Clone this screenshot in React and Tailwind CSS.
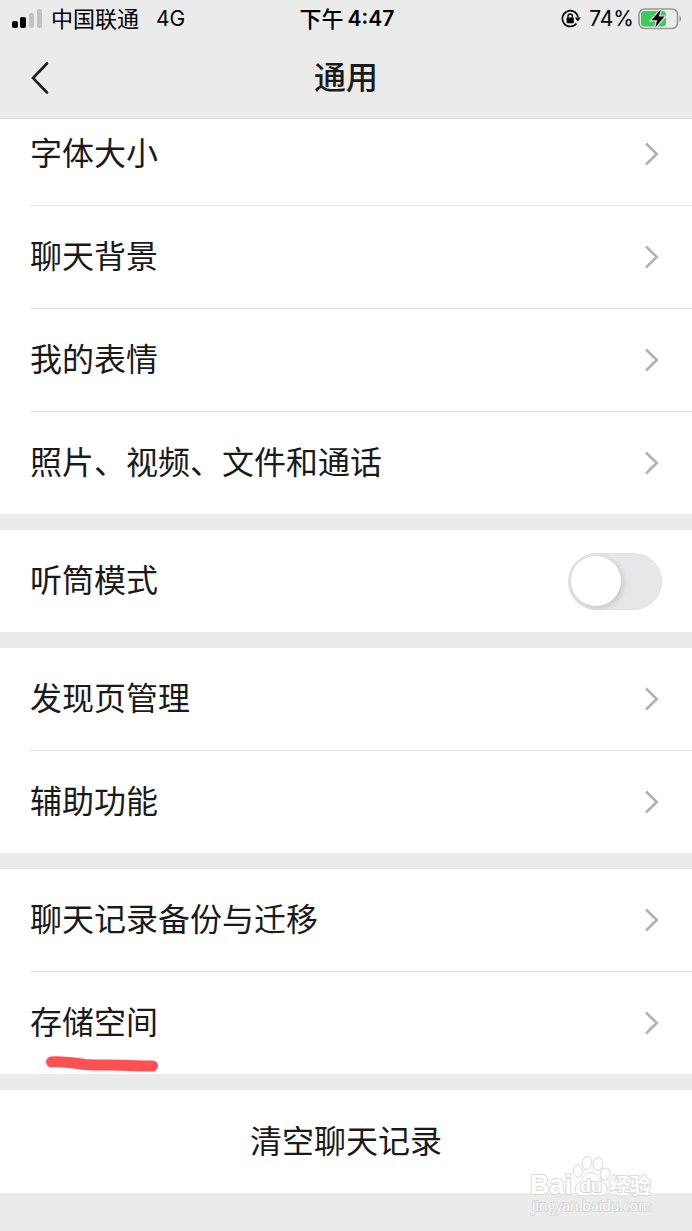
import React, { useState } from 'react';

const groups = [
  ['字体大小', '聊天背景', '我的表情', '照片、视频、文件和通话'],
  ['发现页管理', '辅助功能'],
  ['聊天记录备份与迁移', '存储空间'],
];

const SignalIcon = () => (
  <svg width="32" height="20" viewBox="0 0 32 20" aria-hidden="true">
    <rect x="0" y="12" width="6" height="7" rx="2" fill="#000" />
    <rect x="8" y="8" width="6" height="11" rx="2" fill="#000" />
    <rect x="17" y="4" width="5" height="15" rx="2" fill="#c2c2c2" />
    <rect x="25" y="0" width="5" height="19" rx="2" fill="#c2c2c2" />
  </svg>
);

const RotationLockIcon = () => (
  <svg width="20" height="20" viewBox="0 0 20 20" fill="none" aria-hidden="true">
    <path d="M15.4 14.6A7.9 7.9 0 1 1 17 8" stroke="#000" strokeWidth="1.6" />
    <path d="M13.8 8.4h6l-3 4z" fill="#000" />
    <rect x="5.6" y="8.6" width="7.2" height="5.6" rx="1" fill="#000" />
    <path d="M7 9V7.2a2.2 2.2 0 0 1 4.4 0V9" stroke="#000" strokeWidth="1.3" />
  </svg>
);

const BatteryIcon = () => (
  <svg width="44" height="24" viewBox="0 0 44 24" aria-hidden="true">
    <rect x="1" y="2" width="38.5" height="19.5" rx="5.5" fill="none" stroke="#98989a" strokeWidth="1.6" />
    <path d="M41.5 8.5c2 .8 2 5.6 0 6.4z" fill="#98989a" />
    <rect x="3" y="4" width="25" height="15.5" rx="3.5" fill="#3fc95c" />
    <path
      d="M22.8 2.5 13.5 13.2h5.6L17.3 20.5l9.2-10.9h-5.7z"
      fill="#000"
      stroke="#ebebeb"
      strokeWidth="2.4"
      paintOrder="stroke"
    />
  </svg>
);

const Chevron = () => (
  <svg width="16" height="26" viewBox="0 0 16 26" fill="none" aria-hidden="true">
    <path d="M2 2.5 12.8 13 2 23.5" stroke="#b2b2b2" strokeWidth="2.6" />
  </svg>
);

const Marker = () => (
  <svg className="absolute left-[15px] top-14" width="114" height="18" viewBox="0 0 114 18" fill="none" aria-hidden="true">
    <path
      d="M6.5 7c12-.8 20 .8 33 2.4 12 1 26 .4 38 .8 10 .8 20 .8 30 .8"
      stroke="#fb5153"
      strokeWidth="11"
      strokeLinecap="round"
    />
  </svg>
);

const Row = ({ label, last, marked }) => (
  <button type="button" className="block w-full pl-[30px] text-left">
    <span className={`box-content flex h-[102px] items-center justify-between ${last ? '' : 'border-b border-[#e3e3e3]'}`}>
      <span className="relative">
        {label}
        {marked && <Marker />}
      </span>
      <span className="pr-8">
        <Chevron />
      </span>
    </span>
  </button>
);

const Group = ({ items }) => (
  <section className="bg-white">
    {items.map((label, i) => (
      <Row key={label} label={label} last={i === items.length - 1} marked={label === '存储空间'} />
    ))}
  </section>
);

const Watermark = () => (
  <svg
    className="pointer-events-none absolute bottom-3 right-8 overflow-visible"
    width="130"
    height="64"
    viewBox="0 0 130 64"
    fill="#fff"
    stroke="#dadada"
    strokeWidth="1"
  >
    <g strokeWidth="2" paintOrder="stroke" strokeLinejoin="round">
      <text x="0" y="39" fontFamily="Liberation Sans, sans-serif" fontWeight="700" fontSize="27">Bai</text>
      <text x="79" y="38" fontFamily="Noto Sans CJK SC, sans-serif" fontWeight="700" fontSize="21">经验</text>
      <text x="2" y="56" fontFamily="Open Sans, sans-serif" fontSize="14" stroke="#d8d8d8" fill="#f8f8f8">
        jingyan.baidu.com
      </text>
    </g>
    <path d="M61 17.5c-6 0-7.5 6-11 9-4 3.5-6 7-4 11 3 4.5 8 2.5 15.500 2.500s12 2 15-2.500c2-4 0-7.500-4-11-4-3-5.500-9-11.500-9z" />
    <ellipse cx="48" cy="16" rx="4.6" ry="6.3" transform="rotate(-6 48 16)" />
    <ellipse cx="57" cy="8" rx="4.8" ry="6.6" />
    <ellipse cx="68" cy="9" rx="4.8" ry="6.4" transform="rotate(8 68 9)" />
    <ellipse cx="75" cy="19" rx="4.8" ry="6.2" transform="rotate(16 75 19)" />
    <text x="50" y="37" fontFamily="Liberation Sans, sans-serif" fontWeight="700" fontSize="18" stroke="#d6d6d6" strokeWidth="2" paintOrder="stroke">
      du
    </text>
  </svg>
);

export default function App() {
  const [earpiece, setEarpiece] = useState(false);

  return (
    <div className="relative min-h-screen bg-[#ebebeb] font-['Inter','Noto_Sans_CJK_SC',sans-serif] text-[32px] leading-[48px] text-[#1a1a1a]">
      <header className="relative z-10 border-b border-[#dedede] bg-[#ebebeb]">
        <div className="grid h-[38px] grid-cols-[1fr_auto_1fr] items-center pl-3 pr-[10px] text-[22px] leading-8 text-black">
          <div className="flex items-center gap-[7px]">
            <SignalIcon />
            <span>中国联通</span>
            <span className="ml-[10px] text-[21px]">4G</span>
          </div>
          <div className="flex items-center gap-1 font-medium">
            <span>下午</span>
            <span className="text-[21px] font-semibold">4:47</span>
          </div>
          <div className="flex items-center justify-end gap-1">
            <RotationLockIcon />
            <span className="ml-1 text-[21px]">74%</span>
            <BatteryIcon />
          </div>
        </div>
        <div className="grid h-20 grid-cols-[1fr_auto_1fr] items-center">
          <button type="button" aria-label="返回" className="w-fit pl-[30px]">
            <svg width="20" height="34" viewBox="0 0 20 34" fill="none" aria-hidden="true">
              <path d="M17 2.5 3 17 17 31.5" stroke="#1a1a1a" strokeWidth="2.6" strokeLinecap="round" />
            </svg>
          </button>
          <h1 className="font-medium">通用</h1>
        </div>
      </header>

      <main className="-mt-4 flex flex-col gap-4">
        <Group items={groups[0]} />
        <section className="bg-white">
          <label className="flex h-[102px] items-center justify-between px-[30px]">
            <span>听筒模式</span>
            <span className="relative flex items-center">
              <input
                type="checkbox"
                role="switch"
                checked={earpiece}
                onChange={(e) => setEarpiece(e.target.checked)}
                className="peer h-[57px] w-[94px] appearance-none rounded-full border border-[#e0e0e1] bg-[#e7e7e9] checked:bg-[#07c160]"
              />
              <span className="pointer-events-none absolute left-[3px] size-[50px] rounded-full bg-white shadow-[2px_2px_6px_rgba(0,0,0,0.15)] peer-checked:left-10" />
            </span>
          </label>
        </section>
        <Group items={groups[1]} />
        <Group items={groups[2]} />
        <section className="bg-white">
          <button type="button" className="flex h-[103px] w-full items-center justify-center">
            清空聊天记录
          </button>
        </section>
      </main>

      <Watermark />
    </div>
  );
}
